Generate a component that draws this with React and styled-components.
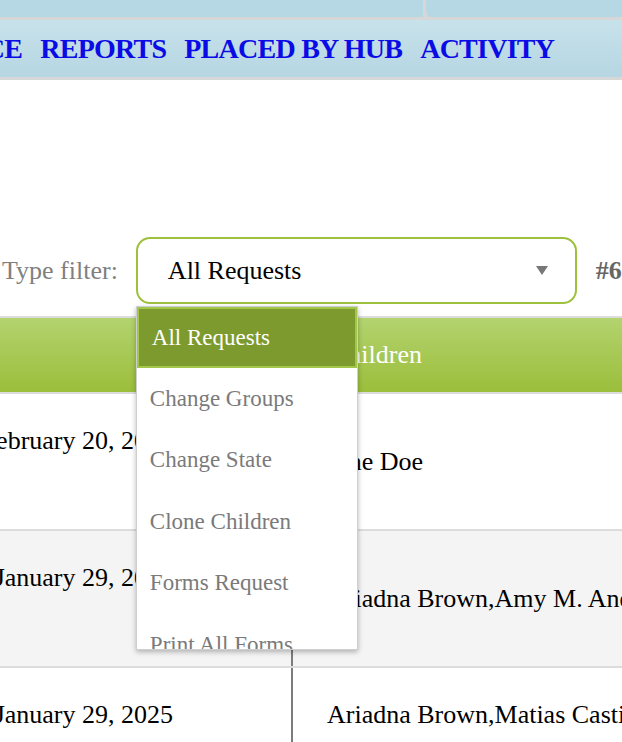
import React from "react";
import styled, { createGlobalStyle } from "styled-components";

const GlobalStyle = createGlobalStyle`
  html, body {
    margin: 0;
    padding: 0;
    background: #fff;
    overflow: hidden;
  }

  body {
    font-family: "Liberation Serif", "Times New Roman", Times, serif;
  }
`;

const Page = styled.div`
  width: 622px;
  height: 742px;
  overflow: hidden;
  position: relative;
`;

const TopStrip = styled.div`
  display: flex;
  height: 20px;
  background-color: #d7d7d7;
`;

const StripFill = styled.div`
  flex: 1;
  height: 17px;
  background-color: #b6d8e4;
`;

const StripTab = styled.div`
  width: 196px;
  height: 17px;
  background-color: #b6d8e4;
  border-left: 3px solid #d7d7d7;
  border-bottom-left-radius: 7px;
`;

const NavBar = styled.nav`
  height: 57px;
  display: flex;
  align-items: center;
  background: linear-gradient(#c8e2eb, #b5d6e2);
  border-bottom: 3px solid #d7d7d7;
  overflow: hidden;
`;

const NavList = styled.div`
  display: flex;
  align-items: center;
  gap: 18px;
  margin-left: -96px;
  white-space: nowrap;
`;

const NavLink = styled.a`
  color: #0b0be6;
  font-weight: bold;
  font-size: 28px;
  letter-spacing: -0.75px;
  text-decoration: none;
`;

const FilterRow = styled.div`
  display: flex;
  align-items: center;
  height: 67px;
  margin-top: 157px;
  padding-left: 2px;
  white-space: nowrap;
`;

const FilterLabel = styled.span`
  color: #808080;
  font-size: 26px;
  margin-right: 18px;
`;

const SelectWrap = styled.div`
  position: relative;
  width: 441px;
  height: 67px;
  flex-shrink: 0;
`;

const SelectBox = styled.div`
  box-sizing: border-box;
  height: 100%;
  display: flex;
  align-items: center;
  justify-content: space-between;
  padding: 0 27px 0 30px;
  border: 2px solid #9dc13f;
  border-radius: 14px;
  background: #fff;
  font-size: 26px;
  color: #000;
`;

const Caret = styled.span`
  width: 0;
  height: 0;
  border-left: 6px solid transparent;
  border-right: 6px solid transparent;
  border-top: 9px solid #777;
`;

const Dropdown = styled.ul`
  position: absolute;
  top: calc(100% + 2px);
  left: 0;
  z-index: 5;
  box-sizing: border-box;
  width: 222px;
  height: 344px;
  margin: 0;
  padding: 0;
  list-style: none;
  overflow: hidden;
  background: #fff;
  border: 1px solid #cfcfcf;
  box-shadow: 0 2px 5px rgba(0, 0, 0, 0.28);
`;

const Option = styled.li`
  box-sizing: border-box;
  height: 61.4px;
  display: flex;
  align-items: center;
  padding-left: 13px;
  font-size: 23px;
  color: ${({ selected }) => (selected ? "#fff" : "#7a7a7a")};
  background: ${({ selected }) => (selected ? "#7d9a2e" : "#fff")};
  border: ${({ selected }) => (selected ? "2px solid #a2c64a" : "none")};
`;

const Count = styled.span`
  margin-left: 19px;
  color: #666;
  font-weight: bold;
  font-size: 26px;
`;

const Table = styled.div`
  width: 1000px;
  margin-top: 12px;
  margin-left: -41px;
`;

const HeaderRow = styled.div`
  display: grid;
  grid-template-columns: 332px 1fr;
  height: 74px;
  border-top: 2px solid #dcdcdc;
  border-bottom: 2px solid #dcdcdc;
  background: linear-gradient(#b3d36f, #9bbe3b);
`;

const HeaderCell = styled.div`
  display: flex;
  align-items: center;
  padding-left: 40px;
  color: #fff;
  font-size: 26px;
`;

const Row = styled.div`
  display: grid;
  grid-template-columns: 332px 1fr;
  min-height: 135px;
  border-bottom: 2px solid #dcdcdc;
  background: ${({ alt }) => (alt ? "#f4f4f4" : "#fff")};
  font-size: 26px;
  line-height: 36px;
  color: #000;
`;

const DateCell = styled.div`
  padding: 29px 118px 0 0;
  text-align: right;
  white-space: nowrap;
`;

const NameCell = styled.div`
  display: flex;
  align-items: ${({ top }) => (top ? "flex-start" : "center")};
  padding: 29px 40px 29px 34px;
  border-left: 2px solid #7c7c7c;
  white-space: nowrap;
  overflow: hidden;
`;

const requests = [
  { date: "February 20, 2025", names: "Jane Doe" },
  { date: "January 29, 2025", names: "Ariadna Brown,Amy M. Andrews" },
  {
    date: "January 29, 2025",
    names: "Ariadna Brown,Matias Castillo,Jane Doe",
    top: true,
  },
];

const options = [
  "All Requests",
  "Change Groups",
  "Change State",
  "Clone Children",
  "Forms Request",
  "Print All Forms",
  "Transfer",
];

export default function App() {
  return (
    <Page>
      <GlobalStyle />
      <TopStrip>
        <StripFill />
        <StripTab />
      </TopStrip>
      <NavBar>
        <NavList>
          <NavLink href="#">SERVICE</NavLink>
          <NavLink href="#">REPORTS</NavLink>
          <NavLink href="#">PLACED BY HUB</NavLink>
          <NavLink href="#">ACTIVITY</NavLink>
        </NavList>
      </NavBar>

      <FilterRow>
        <FilterLabel>Type filter:</FilterLabel>
        <SelectWrap>
          <SelectBox>
            <span>All Requests</span>
            <Caret />
          </SelectBox>
          <Dropdown>
            {options.map((opt, i) => (
              <Option key={opt} selected={i === 0}>
                {opt}
              </Option>
            ))}
          </Dropdown>
        </SelectWrap>
        <Count>#65</Count>
      </FilterRow>

      <Table>
        <HeaderRow>
          <HeaderCell />
          <HeaderCell>Children</HeaderCell>
        </HeaderRow>
        {requests.map((r, i) => (
          <Row key={i} alt={i % 2 === 1}>
            <DateCell>{r.date}</DateCell>
            <NameCell top={r.top}>{r.names}</NameCell>
          </Row>
        ))}
      </Table>
    </Page>
  );
}
